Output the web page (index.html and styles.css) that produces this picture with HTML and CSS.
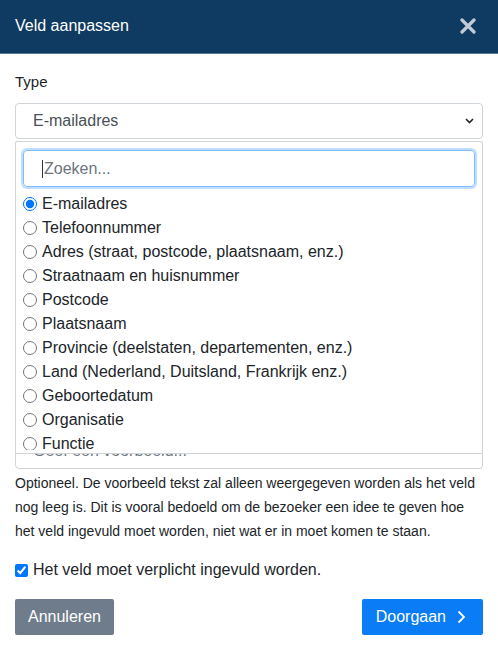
FILE: index.html
```html
<!DOCTYPE html>
<html lang="nl">
<head>
<meta charset="utf-8">
<title>Veld aanpassen</title>
<link rel="stylesheet" href="styles.css">
</head>
<body>
<div class="modal">
  <div class="modal-header">
    <h1 class="modal-title">Veld aanpassen</h1>
    <button class="close" aria-label="Sluiten">
      <svg width="16" height="16" viewBox="0 0 16 16"><path d="M2 2 L14 14 M14 2 L2 14" stroke="currentColor" stroke-width="3.2" stroke-linecap="round"/></svg>
    </button>
  </div>
  <div class="modal-body">
    <div class="fields">
      <div class="form-group">
        <label class="label">Type</label>
        <div class="select-wrap">
          <div class="select">
            <span>E-mailadres</span>
            <svg class="chev" width="9" height="6" viewBox="0 0 9 6"><path d="M1 1 L4.5 4.5 L8 1" fill="none" stroke="#222" stroke-width="1.6"/></svg>
          </div>
          <div class="dropdown">
            <div class="search">Zoeken...</div>
            <ul class="options">
              <li><input type="radio" name="t" checked><span>E-mailadres</span></li>
              <li><input type="radio" name="t"><span>Telefoonnummer</span></li>
              <li><input type="radio" name="t"><span>Adres (straat, postcode, plaatsnaam, enz.)</span></li>
              <li><input type="radio" name="t"><span>Straatnaam en huisnummer</span></li>
              <li><input type="radio" name="t"><span>Postcode</span></li>
              <li><input type="radio" name="t"><span>Plaatsnaam</span></li>
              <li><input type="radio" name="t"><span>Provincie (deelstaten, departementen, enz.)</span></li>
              <li><input type="radio" name="t"><span>Land (Nederland, Duitsland, Frankrijk enz.)</span></li>
              <li><input type="radio" name="t"><span>Geboortedatum</span></li>
              <li><input type="radio" name="t"><span>Organisatie</span></li>
              <li><input type="radio" name="t"><span>Functie</span></li>
              <li><input type="radio" name="t"><span>Website</span></li>
            </ul>
          </div>
        </div>
      </div>
      <div class="form-group">
        <label class="label">Label</label>
        <div class="input">E-mailadres</div>
      </div>
      <div class="form-group">
        <label class="label">Beschrijving</label>
        <div class="input"></div>
      </div>
      <div class="form-group">
        <label class="label">Standaardwaarde</label>
        <div class="input"></div>
      </div>
      <div class="form-group">
        <label class="label">Voorbeeld tekst</label>
        <div class="input placeholder">Geef een voorbeeld...</div>
      </div>
    </div>
    <p class="help">Optioneel. De voorbeeld tekst zal alleen weergegeven worden als het veld nog leeg is. Dit is vooral bedoeld om de bezoeker een idee te geven hoe het veld ingevuld moet worden, niet wat er in moet komen te staan.</p>
    <label class="check"><input type="checkbox" checked><span>Het veld moet verplicht ingevuld worden.</span></label>
    <div class="actions">
      <button class="btn btn-secondary">Annuleren</button>
      <button class="btn btn-primary">Doorgaan
        <svg width="9" height="14" viewBox="0 0 9 14"><path d="M1.5 1.5 L7 7 L1.5 12.5" fill="none" stroke="#fff" stroke-width="1.8"/></svg>
      </button>
    </div>
  </div>
</div>
</body>
</html>
```

FILE: styles.css
```css
* { box-sizing: border-box; }
html, body { margin: 0; padding: 0; background: #fff; }
body {
  font-family: "Liberation Sans", Arial, sans-serif;
  color: #212529;
  width: 498px;
  height: 646px;
  overflow: hidden;
}
.modal-header {
  height: 54px;
  background: #0f3a61;
  border-bottom: 1px solid #5a7891;
  display: flex;
  align-items: center;
  justify-content: space-between;
  padding: 0 22px 2px 15px;
}
.modal-title {
  margin: 0;
  font-size: 16px;
  font-weight: normal;
  color: #fff;
  line-height: 20px;
}
.close {
  background: none;
  border: 0;
  padding: 0;
  color: #c3ccd6;
  display: flex;
}
.modal-body { padding: 16px 15px 0; }
.fields { display: flex; flex-direction: column; gap: 13.5px; }
.label {
  display: block;
  font-size: 15px;
  line-height: 24px;
  margin-bottom: 9px;
  color: #212529;
}
.select-wrap { position: relative; }
.select, .input {
  height: 36px;
  border: 1px solid #ced4da;
  border-radius: 4px;
  display: flex;
  align-items: center;
  padding: 0 8px 0 17px;
  font-size: 16px;
  color: #495057;
}
.select { justify-content: space-between; }
.placeholder { color: #6c757d; }
.dropdown {
  position: absolute;
  left: 0;
  right: 0;
  top: 38px;
  background: #fff;
  border: 1px solid #d0d4d8;
  border-radius: 2px;
  padding: 8px 7px 3px;
  z-index: 5;
}
.search {
  height: 37px;
  border: 1px solid #80bdff;
  border-radius: 4px;
  box-shadow: 0 0 0 2px rgba(0, 123, 255, 0.25);
  display: flex;
  align-items: center;
  padding-left: 18px;
  font-size: 16px;
  color: #6c757d;
}
.search::before {
  content: "";
  width: 1px;
  height: 18px;
  background: #333;
  margin-right: 1px;
}
.options {
  list-style: none;
  margin: 5px 0 0;
  padding: 0;
  height: 258px;
  overflow: hidden;
}
.options li {
  height: 24px;
  display: flex;
  align-items: center;
  font-size: 16px;
  color: #212529;
}
.options input {
  margin: 0 5px 0 0;
  width: 14px;
  height: 14px;
}
.help {
  margin: 2px 0 0;
  font-size: 14px;
  line-height: 24px;
  color: #212529;
}
.check {
  display: flex;
  align-items: center;
  margin-top: 16px;
  font-size: 16px;
  line-height: 22px;
}
.check input { margin: 0 5px 0 0; width: 13px; height: 13px; }
.actions {
  display: flex;
  justify-content: space-between;
  margin-top: 18px;
}
.btn {
  height: 36px;
  border: 0;
  border-radius: 2px;
  font-family: "Liberation Sans", Arial, sans-serif;
  font-size: 16px;
  color: #fff;
  display: flex;
  align-items: center;
  gap: 11px;
}
.btn-secondary { background: #6e7c8b; padding: 0 13px; }
.btn-primary { background: #0a7cf5; padding: 0 17px 0 14px; }
```
